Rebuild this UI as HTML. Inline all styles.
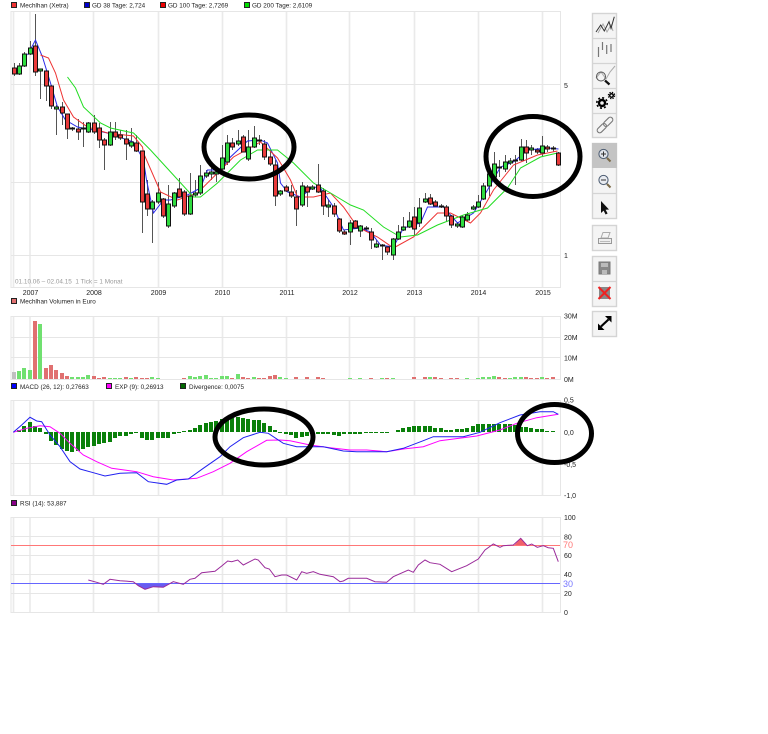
<!DOCTYPE html>
<html><head><meta charset="utf-8"><title>Chart</title>
<style>
html,body{margin:0;padding:0;background:#fff;width:768px;height:734px;overflow:hidden}
svg{display:block}
text{font-family:"Liberation Sans",sans-serif;font-size:7px;fill:#222}
text.t{font-size:6.35px}
.g{fill:none;stroke:#e6e6e6;stroke-width:1}
.v{fill:none;stroke:#eaeaea;stroke-width:1.6}
.l{fill:none;stroke-width:1}
.b{fill:#f4f4f4;stroke:#d4d4d4;stroke-width:1.4}
</style></head><body>
<svg width="768" height="734" viewBox="0 0 768 734" xmlns="http://www.w3.org/2000/svg">
<!-- legend main -->
<g stroke="#222" stroke-width="1">
<rect x="11.5" y="2.5" width="5" height="5" fill="#e33"/>
<rect x="84.5" y="2.5" width="5" height="5" fill="#00c"/>
<rect x="160.5" y="2.5" width="5" height="5" fill="#e00"/>
<rect x="244.5" y="2.5" width="5" height="5" fill="#0d0"/>
<rect x="11.5" y="298.5" width="5" height="5" fill="#e07070"/>
<rect x="11.5" y="383.5" width="5" height="5" fill="#00f"/>
<rect x="106.5" y="383.5" width="5" height="5" fill="#f0f"/>
<rect x="180.5" y="383.5" width="5" height="5" fill="#060"/>
<rect x="11.5" y="500.5" width="5" height="5" fill="#808"/>
</g>
<text class="t" x="20" y="7.5">Mechlhan (Xetra)</text>
<text class="t" x="92" y="7.5">GD 38 Tage: 2,724</text>
<text class="t" x="168" y="7.5">GD 100 Tage: 2,7269</text>
<text class="t" x="252" y="7.5">GD 200 Tage: 2,6109</text>
<text class="t" x="20" y="303.5">Mechlhan Volumen in Euro</text>
<text class="t" x="20" y="389">MACD (26, 12): 0,27663</text>
<text class="t" x="115" y="389">EXP (9): 0,26913</text>
<text class="t" x="189" y="389">Divergence: 0,0075</text>
<text class="t" x="20" y="505.5">RSI (14): 53,887</text>

<!-- grids -->
<path class="v" d="M13.5 12V287M30 12V287M93.5 12V287M158.5 12V287M222.5 12V287M286.5 12V287M349.5 12V287M414.5 12V287M478.5 12V287M542.5 12V287"/>
<path class="g" d="M11 11.5H560.5V287.5H11ZM11 84.5H560.5M11 182.5H560.5M11 255.5H560.5"/>
<path class="v" d="M13.5 316V379M30 316V379M93.5 316V379M158.5 316V379M222.5 316V379M286.5 316V379M349.5 316V379M414.5 316V379M478.5 316V379M542.5 316V379"/>
<path class="g" d="M11 316.5H560.5V379.5H11ZM11 337.5H560.5M11 357.5H560.5"/>
<path class="v" d="M13.5 400V496M30 400V496M93.5 400V496M158.5 400V496M222.5 400V496M286.5 400V496M349.5 400V496M414.5 400V496M478.5 400V496M542.5 400V496"/>
<path class="g" d="M11 400.5H560.5V495.5H11ZM11 463.5H560.5"/>
<path class="v" d="M13.5 518V612M30 518V612M93.5 518V612M158.5 518V612M222.5 518V612M286.5 518V612M349.5 518V612M414.5 518V612M478.5 518V612M542.5 518V612"/>
<path class="g" d="M11 517.5H560.5V612.5H11ZM11 536.5H560.5M11 555.5H560.5M11 574.5H560.5M11 593.5H560.5"/>

<!-- axes text -->
<g text-anchor="middle">
<text x="30.5" y="295">2007</text><text x="94" y="295">2008</text><text x="158.5" y="295">2009</text><text x="222.5" y="295">2010</text><text x="287" y="295">2011</text><text x="350" y="295">2012</text><text x="414.5" y="295">2013</text><text x="478.5" y="295">2014</text><text x="543" y="295">2015</text>
</g>
<text x="15" y="283.5" style="fill:#9a9a9a;font-size:6.4px">01.10.06 – 02.04.15 &#160;1 Tick = 1 Monat</text>
<text x="564" y="88">5</text><text x="564" y="258">1</text>
<text x="564" y="318.5">30M</text><text x="564" y="340">20M</text><text x="564" y="360.5">10M</text><text x="564" y="382">0M</text>
<text x="564" y="402.5">0,5</text><text x="564" y="435">0,0</text><text x="564" y="467">-0,5</text><text x="564" y="498">-1,0</text>
<text x="564" y="520">100</text><text x="564" y="539.5">80</text><text x="564" y="558">60</text><text x="564" y="577">40</text><text x="564" y="596">20</text><text x="564" y="615">0</text>
<text x="563" y="548" style="font-size:9px;fill:#f77">70</text>
<text x="563" y="587" style="font-size:9px;fill:#77f">30</text>

<!-- wicks -->
<g transform="translate(.5,0)">
<path fill="none" stroke="#555" stroke-width="1" d="M14 63V76M19 63V75M24 52V67M30 41V55M35 14V76M40 69V99M46 70V101M51 85V109M56 105V135M62 102V125M67 114V139M72 127V131M78 119V140M83 122V147M88 122V133M94 115V134M99 123V148M104 138V170M110 122V146M115 122V140M120 130V140M126 130V160M131 128V148M136 135V152M142 151V233M147 180V216M152 200V243M158 182V204M163 198V218M168 185V228M174 192V208M179 178V198M184 190V216M190 173V215M195 180V197M200 165V195M206 170V178M211 168V180M216 172V182M222 145V170M227 135V165M232 138V150M238 130V146M243 135V152M248 130V161M254 126V148M259 135V145M264 140V160M270 150V166M275 160V206M280 190V196M286 185V192M291 185V198M296 190V226M302 182V207M307 185V207M312 185V190M318 164V193M323 188V215M328 200V217M334 203V217M339 218V233M344 230V235M350 220V245M355 220V229M360 225V237M366 226V232M371 228V249M376 240V248M382 244V260M387 246V255M393 238V260M398 225V240M403 217V231M409 212V228M414 207V235M419 198V227M425 193V203M430 194V205M435 200V207M441 204V208M446 205V222M451 215V228M457 222V228M462 215V228M467 212V222M473 205V210M478 195V208M483 183V200M489 172V196M494 152V180M499 160V177M505 155V172M510 158V165M515 155V185M521 139V161M526 140V163M531 145V155M537 148V154M542 136V157M547 145V152M553 146V152M558 152V166"/>
<!-- moving averages -->
<path class="l" stroke="#2a2ae8" d="M27 55L35 40L42 57L50 83L57 107L65 120L77 127L93 130L107 133L133 142L143 160L146 180L153 213L163 200L170 200L187 195L200 188L207 170L220 170L230 157L247 141L260 140L267 143L277 163L280 183L287 192L300 197L313 187L320 188L333 207L343 230L360 228L370 232L380 245L393 247L403 228L420 223L427 207L443 207L457 223L473 213L487 190L500 167L513 162L527 150L547 148L558 149"/>
<path class="l" stroke="#ee3333" d="M40 55L48 58L55 73L63 100L73 117L87 127L107 133L133 136L142 147L143 153L160 192L177 200L197 193L213 177L233 157L260 142L277 158L280 163L290 180L297 197L313 197L330 193L343 207L357 227L377 237L393 248L413 237L427 223L437 213L450 213L470 223L480 213L493 190L513 165L537 155L557 151"/>
<path class="l" stroke="#22dd22" d="M67 77L75 88L83 107L100 123L110 128L133 133L150 150L193 197L200 197L217 183L240 160L257 150L277 150L293 163L313 183L330 193L350 205L363 210L383 227L400 237L417 235L437 225L463 215L487 208L507 188L520 168L540 157L557 153"/>
<!-- candles -->
<path fill="#e93a3a" stroke="#111" stroke-width="1" d="M12 68h4v6h-4zM33 46h4v26h-4zM44 71h4v15h-4zM49 86h4v20h-4zM60 107h4v6h-4zM65 114h4v15h-4zM76 129h4v3h-4zM92 123h4v9h-4zM97 128h4v12h-4zM102 140h4v5h-4zM113 132h4v5h-4zM118 135h4v3h-4zM124 139h4v5h-4zM134 143h4v8h-4zM140 151h4v51h-4zM145 194h4v15h-4zM161 199h4v17h-4zM177 189h4v8h-4zM182 192h4v22h-4zM230 143h4v4h-4zM241 137h4v15h-4zM262 144h4v13h-4zM268 157h4v7h-4zM273 165h4v31h-4zM284 187h4v4h-4zM289 192h4v4h-4zM294 197h4v12h-4zM305 187h4v5h-4zM316 185h4v7h-4zM321 191h4v15h-4zM332 206h4v8h-4zM337 219h4v12h-4zM342 232h4v2h-4zM353 221h4v7h-4zM369 232h4v8h-4zM385 247h4v5h-4zM412 217h4v12h-4zM428 198h4v6h-4zM433 202h4v4h-4zM439 206h4v1h-4zM444 207h4v9h-4zM449 216h4v9h-4zM497 167h4v1h-4zM524 147h4v6h-4zM535 150h4v2h-4zM545 147h4v2h-4zM556 153h4v12h-4z"/>
<path fill="#2fdc3f" stroke="#111" stroke-width="1" d="M17 66h4v8h-4zM22 54h4v12h-4zM28 48h4v6h-4zM38 69h4v2h-4zM54 107h4v2h-4zM70 128h4v1h-4zM81 128h4v1h-4zM86 123h4v9h-4zM108 132h4v13h-4zM129 142h4v4h-4zM150 202h4v7h-4zM156 193h4v9h-4zM166 204h4v22h-4zM172 193h4v13h-4zM188 196h4v18h-4zM193 193h4v2h-4zM198 176h4v17h-4zM204 173h4v3h-4zM209 172h4v2h-4zM214 172h4v2h-4zM220 158h4v11h-4zM225 143h4v19h-4zM236 141h4v3h-4zM246 147h4v12h-4zM252 138h4v9h-4zM257 140h4v1h-4zM278 191h4v3h-4zM300 186h4v19h-4zM310 187h4v2h-4zM326 205h4v2h-4zM348 223h4v9h-4zM358 226h4v5h-4zM364 228h4v1h-4zM374 244h4v3h-4zM380 245h4v1h-4zM391 239h4v16h-4zM396 232h4v7h-4zM401 227h4v3h-4zM407 221h4v6h-4zM417 208h4v15h-4zM423 199h4v3h-4zM455 224h4v2h-4zM460 217h4v10h-4zM465 215h4v5h-4zM471 207h4v2h-4zM476 202h4v5h-4zM481 186h4v13h-4zM487 174h4v12h-4zM492 164h4v13h-4zM503 162h4v7h-4zM508 161h4v2h-4zM513 160h4v1h-4zM519 147h4v13h-4zM529 148h4v2h-4zM540 146h4v7h-4zM551 148h4v1h-4z"/>
</g>

<!-- volume -->
<path fill="none" stroke="#c0c0c0" stroke-width="4" d="M14 379V372"/>
<path fill="none" stroke="#e07070" stroke-width="4" d="M35 379V321M46 379V368M51 379V365M56 379V370M62 379V373M67 379V376M94 379V376M99 379V378M104 379V377M126 379V377M136 379V377M142 379V378M147 379V378M184 379V378M232 379V378M243 379V377M248 379V378M259 379V378M264 379V378M270 379V376M275 379V375M296 379V377M307 379V377M318 379V377M323 379V378M371 379V378M387 379V378M414 379V377M425 379V377M435 379V377M441 379V378M451 379V378M457 379V378M499 379V377M505 379V378M526 379V377M531 379V378M537 379V378M547 379V378M553 379V377"/>
<path fill="none" stroke="#70e070" stroke-width="4" d="M19 379V371M24 379V368M30 379V370M40 379V324M72 379V377M78 379V377M83 379V377M88 379V375M110 379V378M115 379V378M120 379V378M131 379V378M152 379V377M158 379V378M190 379V376M195 379V377M200 379V376M206 379V375M211 379V378M216 379V378M222 379V376M227 379V376M238 379V374M254 379V377M280 379V377M286 379V378M350 379V378M360 379V378M382 379V378M393 379V378M430 379V377M467 379V378M478 379V378M483 379V377M489 379V377M494 379V376M510 379V378M515 379V377M521 379V377M542 379V377"/>

<!-- MACD -->
<path fill="none" stroke="#0a800a" stroke-width="4" d="M19 432V430M24 432V426M30 432V422M35 432V426M40 432V428M46 432V434M51 432V441M56 432V445M62 432V449M67 432V451M72 432V452M78 432V451M83 432V449M88 432V447M94 432V446M99 432V444M104 432V443M110 432V442M115 432V438M120 432V436M126 432V436M131 432V434M136 432V433M142 432V438M147 432V440M152 432V440M158 432V438M163 432V438M168 432V438M174 432V434M179 432V433M184 432V431M190 432V430M195 432V428M200 432V425M206 432V423M211 432V422M216 432V421M222 432V419M227 432V418M232 432V418M238 432V417M243 432V418M248 432V419M254 432V420M259 432V420M264 432V423M270 432V426M275 432V430M280 432V433M286 432V434M291 432V435M296 432V438M302 432V437M307 432V436M312 432V434M318 432V434M323 432V434M328 432V434M334 432V435M339 432V436M344 432V434M350 432V434M355 432V434M360 432V434M366 432V433M371 432V433M376 432V433M382 432V433M387 432V433M398 432V430M403 432V428M409 432V427M414 432V426M419 432V426M425 432V426M430 432V426M435 432V428M441 432V428M446 432V430M451 432V430M457 432V429M462 432V429M467 432V428M473 432V426M478 432V424M483 432V424M489 432V424M494 432V424M499 432V424M505 432V424M510 432V424M515 432V425M521 432V427M526 432V427M531 432V428M537 432V429M542 432V429M547 432V431M553 432V431"/>
<path class="l" stroke="#f0f" d="M13.3 432.3L26.7 428.3L40 425.7L50 426.7L60 433.3L70 443.3L83.3 455L96.7 461.7L111.7 468.3L136.7 471.7L153.3 476.7L173.3 480L196.7 478.3L213.3 471.7L230 463.3L246.7 451.7L266.7 440.3L280 440L290 440.7L310 445L330 447.7L350 450L366.7 450L386.7 451.7L403.3 449L423.3 446.7L440 440.7L476.7 436L500 430L516.7 423.3L536.7 417.7L558.3 414.3"/>
<path class="l" stroke="#2020f0" d="M13.3 432.3L21.7 425L30 417.3L36.7 421L41.7 421.7L50 435L60 446.7L70 461.7L80 469L93.3 472.7L105 476L120 473.3L136.7 472.7L148.3 481.7L166.7 484.3L176.7 480L188.3 479L203.3 468.3L220 456.7L230 446.7L243.3 437.7L260 432.3L268.3 433.3L283.3 443.3L296.7 446.7L323.3 446.7L343.3 451L356.7 451.7L386.7 451.7L403.3 448.3L423.3 440.7L433.3 436.7L463.3 436.7L480 432.3L500 422.7L520 415L540 411.7L553.3 411.7L558.3 414.3"/>

<!-- RSI -->
<path fill="#6a5cf0" d="M136 583.5L138.3 585.7L145 589.3L153.3 586.7L163.3 587.3L170 583.5Z"/>
<path fill="#f0606a" d="M514 545.5L520.7 538.3L527.3 545.5Z"/>
<path fill="none" stroke="#f77" stroke-width="1" d="M11 545.5H560"/>
<path fill="none" stroke="#66f" stroke-width="1" d="M11 583.5H560"/>
<path class="l" stroke="#9a2a9a" d="M88.3 580L96.7 582.3L103.3 584.3L110 579.3L120 580.7L133.3 581.7L138.3 585.7L145 589.3L153.3 586.7L163.3 587.3L173.3 581.7L183.3 584.3L190 579.3L195 578.3L201.7 572.7L215 571.3L221.7 566L227.7 561L231.7 561.7L237.7 560L243.3 565L255 559L258.3 560L265 567.7L269.3 569L275 576.7L281.7 575L286.7 575L296.7 580L301.7 571.7L306.7 573.3L313.3 571.7L320 574.3L333.3 576.7L340 581.7L343.3 581L348.3 578.3L366.7 578.3L375 581.7L386.7 582.3L393.3 576.7L408.3 570L413.3 572.3L418.3 565L425 560L430 562.7L440 564.3L451.7 571.7L466.7 565.7L478.3 559L485 550L493.3 544L500 547.3L503.3 545.7L513.3 545L520.7 538.3L527.3 545.7L531.7 544L537.3 547.3L543.3 545.7L548.3 547.7L553.3 548.3L558.3 561.7"/>

<!-- hand-drawn ellipses -->
<g fill="none" stroke="#000" stroke-width="5">
<ellipse cx="249" cy="147" rx="45" ry="32"/>
<ellipse cx="533" cy="156.5" rx="47" ry="40"/>
<ellipse cx="264" cy="437" rx="49" ry="28"/>
<ellipse cx="554.5" cy="433.5" rx="37" ry="29"/>
</g>

<!-- toolbar -->
<rect class="b" x="592.5" y="13.5" width="24" height="124"/>
<path fill="none" stroke="#d4d4d4" stroke-width="1.2" d="M593 38.5H616M593 63.5H616M593 88.5H616M593 113.5H616"/>
<rect class="b" x="592.5" y="143.5" width="24" height="75"/>
<rect x="592" y="143" width="25" height="25" fill="#c4c4c4"/>
<path fill="none" stroke="#d4d4d4" stroke-width="1.2" d="M593 193.5H616"/>
<rect class="b" x="592.5" y="225.5" width="24" height="25"/>
<rect class="b" x="592.5" y="256.5" width="24" height="50"/>
<path fill="none" stroke="#d4d4d4" stroke-width="1.2" d="M593 281.5H616"/>
<rect class="b" x="592.5" y="311.5" width="24" height="25"/>

<!-- icon: lines -->
<path fill="none" stroke="#aaa" stroke-width="1" d="M598 33L603 24L607 32L611 25L613 31"/>
<path fill="none" stroke="#333" stroke-width="1" d="M596 32L600.7 25L604.3 31L609 21.7L611 28.3L614.3 16.7"/>
<!-- icon: bars -->
<path fill="none" stroke="#777" stroke-width="1.2" d="M598.5 57V47M602.5 50V42M606.7 54V45M611 52V44"/>
<!-- icon: magnifier -->
<path fill="none" stroke="#aaa" d="M596 78L601 72L606 79L610 72L615 66"/>
<circle cx="601" cy="76.5" r="4.5" fill="none" stroke="#555"/>
<path fill="none" stroke="#111" stroke-width="2.2" d="M605 80.5L609.5 84.5"/>
<!-- icon: gears -->
<circle cx="602" cy="103" r="3" fill="none" stroke="#000" stroke-width="2.4"/>
<circle cx="602" cy="103" r="5.2" fill="none" stroke="#000" stroke-width="1.6" stroke-dasharray="2 2.08"/>
<circle cx="611.5" cy="95.5" r="1.8" fill="none" stroke="#000" stroke-width="1.5"/>
<circle cx="611.5" cy="95.5" r="3.2" fill="none" stroke="#000" stroke-width="1.1" stroke-dasharray="1.4 1.1"/>
<!-- icon: chain -->
<g fill="none" stroke="#777" stroke-width="1.1" transform="rotate(-45 605 125)">
<rect x="595" y="122.5" width="11" height="5" rx="2.5"/>
<rect x="604" y="122.5" width="11" height="5" rx="2.5"/>
</g>
<!-- icon: zoom in -->
<circle cx="603.5" cy="154" r="4.6" fill="#dfe3ea" stroke="#4a5a70" stroke-width="1"/>
<path fill="none" stroke="#333" stroke-width="1" d="M601 154H606M603.5 151.5V156.5"/>
<path fill="none" stroke="#7a6a4a" stroke-width="2" d="M607 158L610.5 161.5"/>
<!-- icon: zoom out -->
<circle cx="603.5" cy="180" r="4.6" fill="#e8ebf0" stroke="#4a5a70" stroke-width="1"/>
<path fill="none" stroke="#333" stroke-width="1" d="M601 180H606"/>
<path fill="none" stroke="#7a6a4a" stroke-width="2" d="M607 184L610.5 187.5"/>
<!-- icon: arrow -->
<path fill="#111" d="M601 201V213L603.6 210.6L605.6 214.5L607.6 213.5L605.6 209.8L609 209.5Z"/>
<!-- icon: print -->
<path fill="#f4f4f4" stroke="#aaa" d="M603 232.5H610L608 238H601Z"/>
<rect x="598.5" y="238.5" width="13" height="5" fill="#eee" stroke="#999"/>
<path stroke="#bbb" d="M600 241.5H610"/>
<!-- icon: save -->
<rect x="599" y="262" width="11" height="12" fill="#888" stroke="#777"/>
<rect x="601" y="263" width="7" height="4" fill="#bbb"/>
<rect x="602" y="270" width="5" height="4" fill="#bbb"/>
<!-- icon: delete -->
<rect x="599" y="287" width="11" height="12" fill="#888"/>
<path fill="none" stroke="#e22" stroke-width="2" d="M598.5 287L610.5 299M610.5 287L598.5 299"/>
<!-- icon: expand -->
<path fill="none" stroke="#000" stroke-width="2.2" d="M601 326.5L608.5 319.5"/>
<path fill="#000" d="M611.5 316V322.5L605 316ZM598 330V323.5L604.5 330Z"/>
</svg>
</body></html>
